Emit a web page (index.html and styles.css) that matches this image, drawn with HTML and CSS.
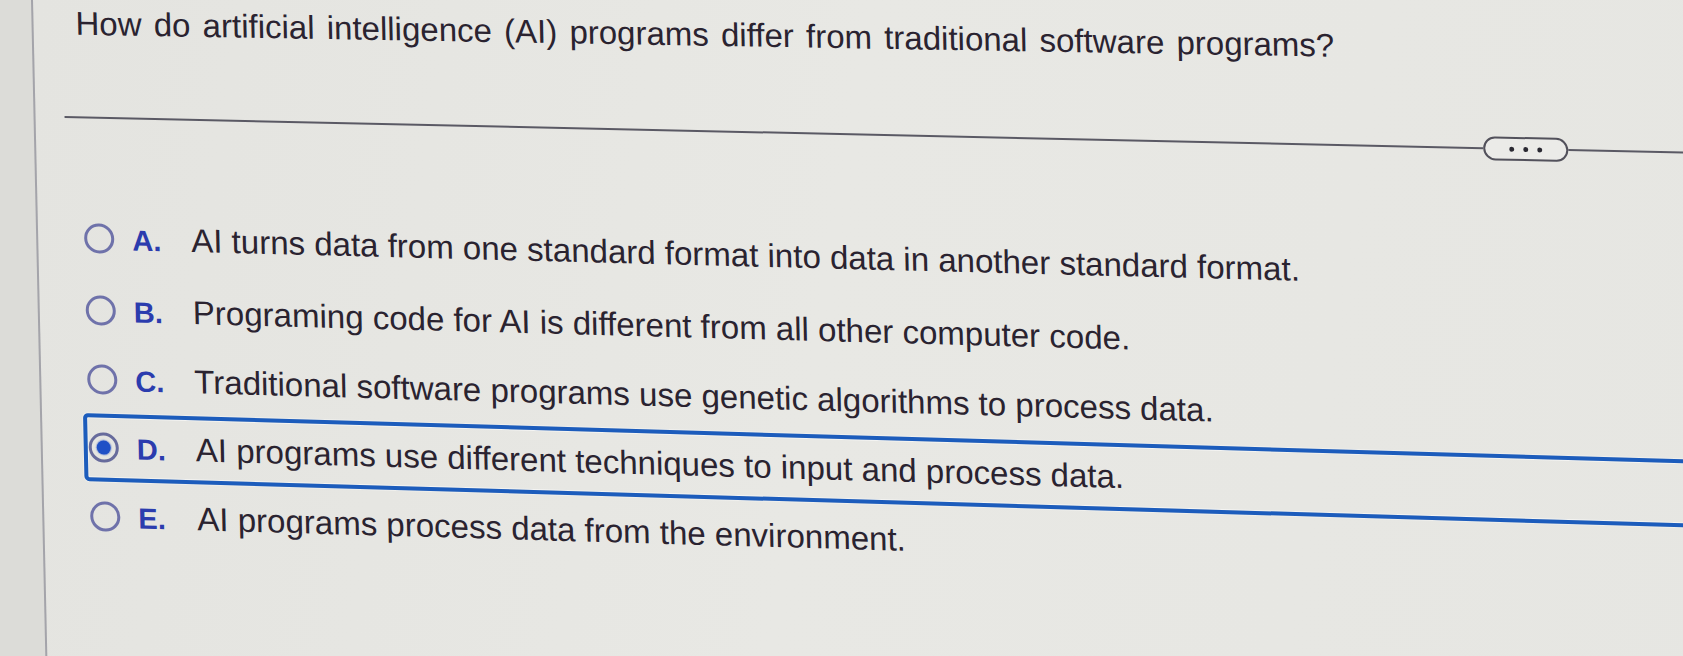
FILE: index.html
```html
<!DOCTYPE html>
<html lang="en">
<head>
<meta charset="utf-8">
<title>Question</title>
<link rel="stylesheet" href="styles.css">
</head>
<body>
<div class="screen">
  <div class="frame">
    <h1 class="question">How do artificial intelligence (AI) programs differ from traditional software programs?</h1>
    <div class="divider">
      <span class="rule lead"></span>
      <span class="more" aria-label="More"><i></i><i></i><i></i></span>
      <span class="rule tail"></span>
    </div>
    <ul class="choices">
      <li class="choice c-a"><span class="radio"></span><span class="label"><b class="key">A.</b><span class="text">AI turns data from one standard format into data in another standard format.</span></span></li>
      <li class="choice c-b"><span class="radio"></span><span class="label"><b class="key">B.</b><span class="text">Programing code for AI is different from all other computer code.</span></span></li>
      <li class="choice c-c"><span class="radio"></span><span class="label"><b class="key">C.</b><span class="text">Traditional software programs use genetic algorithms to process data.</span></span></li>
      <li class="choice c-d selected"><span class="radio checked"></span><span class="label"><b class="key">D.</b><span class="text">AI programs use different techniques to input and process data.</span></span></li>
      <li class="choice c-e"><span class="radio"></span><span class="label"><b class="key">E.</b><span class="text">AI programs process data from the environment.</span></span></li>
    </ul>
  </div>
</div>
</body>
</html>
```

FILE: styles.css
```css
html, body {
  margin: 0;
  padding: 0;
}
body {
  width: 1683px;
  height: 656px;
  overflow: hidden;
  background: #dcdcd8;
  font-family: "Liberation Sans", Arial, Helvetica, sans-serif;
  color: #2a2330;
}
.screen {
  width: 1760px;
  transform: skewX(1.25deg);
  transform-origin: 0 0;
}
.frame {
  margin-left: 31px;
  border-left: 2px solid #a4a4aa;
  min-height: 760px;
  background: linear-gradient(100deg, #e4e4e0 0%, #e8e8e4 45%, #e6e6e2 100%);
}
.question {
  margin: 0;
  padding: 4px 0 0 42px;
  font-size: 33px;
  line-height: 38px;
  font-weight: normal;
  word-spacing: 3px;
  white-space: nowrap;
  transform: skewY(1deg);
  transform-origin: 0 50%;
}
.divider {
  margin: 63px 0 0 29px;
  width: 1700px;
  height: 24px;
  display: flex;
  align-items: center;
  transform: skewY(1.26deg);
  transform-origin: 0 50%;
}
.rule {
  height: 2px;
  background: #5a5964;
}
.rule.lead {
  flex: 0 0 1418px;
}
.rule.tail {
  flex: 1 1 auto;
}
.more {
  flex: 0 0 auto;
  box-sizing: border-box;
  width: 85px;
  height: 24px;
  border: 2px solid #52515b;
  border-radius: 12px;
  background: #ebebe8;
  display: flex;
  align-items: center;
  justify-content: center;
  gap: 9px;
}
.more i {
  width: 5px;
  height: 5px;
  border-radius: 50%;
  background: #2a2932;
}
.choices {
  list-style: none;
  margin: 75px 0 0 0;
  padding: 0;
  display: flex;
  flex-direction: column;
}
.choice {
  box-sizing: border-box;
  height: 68px;
  width: 1720px;
  margin-left: 41px;
  padding-left: 1px;
  border: 4px solid transparent;
  border-radius: 5px;
  display: flex;
  align-items: center;
  transform-origin: 0 50%;
}
.c-a { transform: skewY(1.49deg); }
.c-b { transform: skewY(1.55deg); margin-top: 4px; }
.c-c { transform: skewY(1.6deg); margin-top: 1px; }
.c-d { transform: skewY(1.66deg); }
.c-e { transform: skewY(1.66deg); margin-top: 1px; }
.choice.selected {
  border-color: #1c5cbc;
  box-shadow: inset 0 0 0 1px rgba(255, 255, 255, 0.55), 0 0 0 1px rgba(255, 255, 255, 0.35);
}
.radio {
  flex: 0 0 auto;
  box-sizing: border-box;
  width: 30px;
  height: 30px;
  border: 3px solid #6f72aa;
  border-radius: 50%;
  display: flex;
  align-items: center;
  justify-content: center;
}
.radio.checked {
  border-color: #676b9c;
}
.radio.checked::after {
  content: "";
  width: 14px;
  height: 14px;
  border-radius: 50%;
  background: #1f50c6;
  box-shadow: 0 0 1px 1px rgba(40, 80, 200, 0.35);
}
.label {
  display: flex;
  align-items: baseline;
  margin-left: 18px;
  white-space: nowrap;
}
.key {
  flex: 0 0 59px;
  font-size: 29px;
  font-weight: bold;
  color: #2b3cae;
  line-height: 36px;
}
.text {
  font-size: 33px;
  line-height: 36px;
}
```
